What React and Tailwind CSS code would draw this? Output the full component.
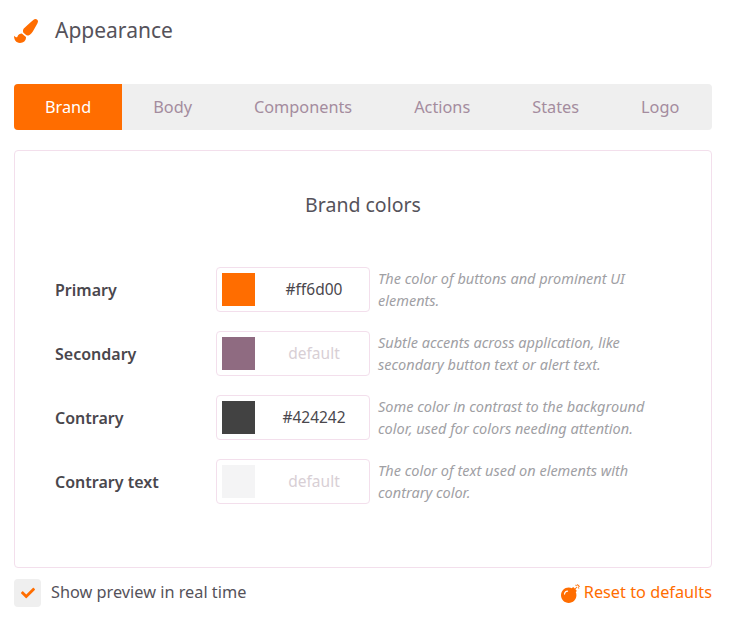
import { FaPaintBrush, FaBomb, FaCheck } from 'react-icons/fa'

const tabs = ['Brand', 'Body', 'Components', 'Actions', 'States', 'Logo']

const colorRows = [
  { label: 'Primary', swatch: 'bg-[#ff6d00]', value: '#ff6d00', help: 'The color of buttons and prominent UI elements.' },
  { label: 'Secondary', swatch: 'bg-[#8f6b81]', value: null, help: 'Subtle accents across application, like secondary button text or alert text.' },
  { label: 'Contrary', swatch: 'bg-[#424242]', value: '#424242', help: 'Some color in contrast to the background color, used for colors needing attention.' },
  { label: 'Contrary text', swatch: 'bg-[#f4f4f5]', value: null, help: 'The color of text used on elements with contrary color.' },
]

const ColorRow = ({ label, swatch, value, help }) => (
  <div className="flex items-center h-[45px]">
    <div className="w-[161px] font-semibold text-[16px] text-[#4a474d]">{label}</div>
    <div className="w-[154px] h-[45px] flex items-center p-[5px] border border-[#f3dfec] rounded-[4px] shrink-0">
      <div className={`w-[33px] h-[33px] ${swatch}`}></div>
      <div className={`flex-1 ml-[9px] pt-[1px] text-center text-[15.500px] ${value ? 'text-[#4a474d]' : 'text-[#d8cfd5]'}`}>
        {value || 'default'}
      </div>
    </div>
    <p className="ml-2 mb-[1px] w-[280px] text-[14.500px] leading-[22px] italic text-[#a0a0a4]">{help}</p>
  </div>
)

export default function App() {
  return (
    <div className="w-[735px] h-[637px] bg-white pl-[14px] pr-[23px] font-['Noto_Sans','Open_Sans',sans-serif] overflow-hidden">
      <div className="flex items-center h-[84px] pb-[23px] gap-[17px]">
        <FaPaintBrush size={24} className="text-[#ff6d00]" />
        <h1 className="text-[21px] text-[#55525a]">Appearance</h1>
      </div>

      <div className="flex h-[46px] bg-[#efefef] rounded-[4px] overflow-hidden">
        {tabs.map((tab, i) => (
          <div
            key={tab}
            className={`flex items-center justify-center px-[31px] text-[16.300px] ${
              i === 0 ? 'bg-[#ff6d00] text-white' : 'text-[#a48c9e]'
            }`}
          >
            {tab}
          </div>
        ))}
      </div>

      <div className="mt-5 h-[418px] border border-[#f3dfec] rounded-[4px] px-10">
        <h2 className="mt-[39px] h-[30px] text-center text-[19.500px] text-[#55525a]">Brand colors</h2>
        <div className="mt-[47px] flex flex-col gap-[19px]">
          {colorRows.map((row) => (
            <ColorRow key={row.label} {...row} />
          ))}
        </div>
      </div>

      <div className="mt-[11px] flex items-center justify-between">
        <label className="flex items-center gap-[10px] text-[16.300px] text-[#55525a]">
          <span className="w-[27px] h-[28px] rounded-[4px] bg-[#efefef] flex items-center justify-center">
            <FaCheck size={14} className="text-[#ff6d00]" />
          </span>
          <span className="mb-[2px]">Show preview in real time</span>
        </label>
        <a className="flex items-center gap-[4px] text-[16.300px] text-[#ff6d00]">
          <FaBomb size={19} />
          <span className="mb-[2px]">Reset to defaults</span>
        </a>
      </div>
    </div>
  )
}
